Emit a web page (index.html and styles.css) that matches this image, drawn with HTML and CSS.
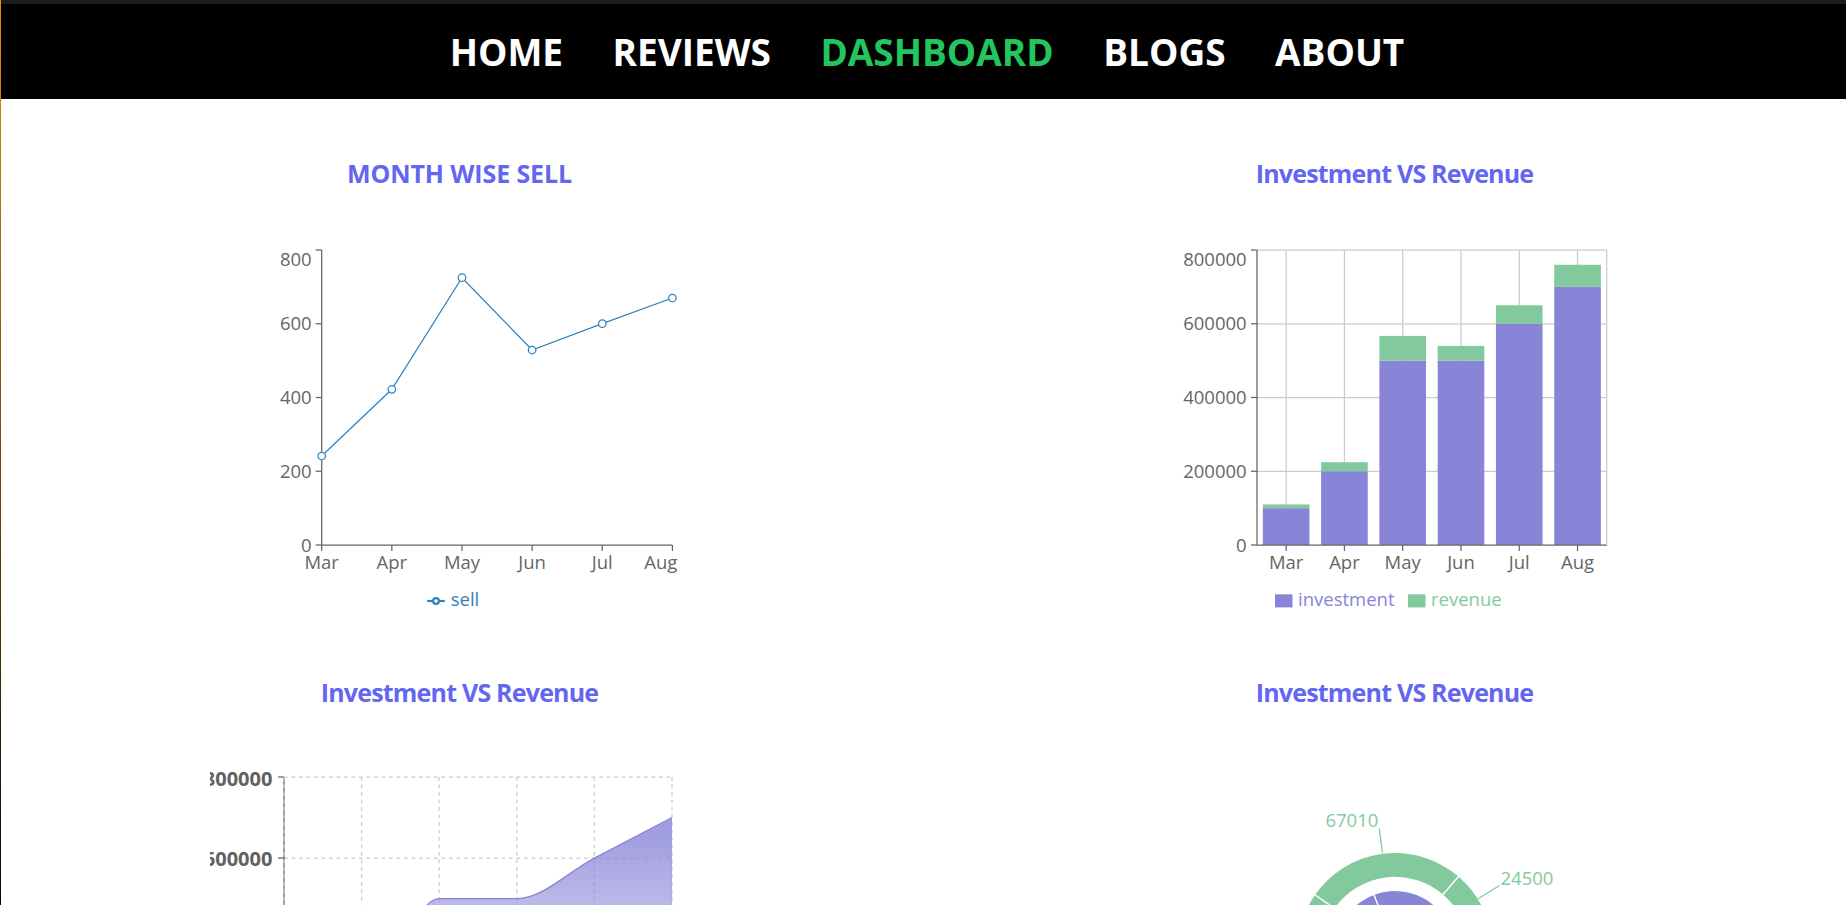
FILE: index.html
```html
<!DOCTYPE html>
<html lang="en">
<head>
<meta charset="utf-8">
<title>Dashboard</title>
<link rel="stylesheet" href="styles.css">
</head>
<body>
<header class="topbar">
  <nav>
    <ul class="nav-list">
      <li><a class="nav-link" href="#">HOME</a></li>
      <li><a class="nav-link" href="#">REVIEWS</a></li>
      <li><a class="nav-link active" href="#">DASHBOARD</a></li>
      <li><a class="nav-link" href="#">BLOGS</a></li>
      <li><a class="nav-link" href="#">ABOUT</a></li>
    </ul>
  </nav>
</header>

<main class="dashboard">
  <section class="card">
    <h2 class="card-title card-title--caps">MONTH WISE SELL</h2>
    <svg class="chart" viewBox="0 0 500 488.5" width="500" height="488.5">
      <g class="axis">
        <line x1="111.7" y1="62" x2="111.7" y2="357"/>
        <line x1="111.7" y1="357" x2="462.4" y2="357"/>
        <line x1="105.7" y1="62" x2="111.7" y2="62"/>
        <line x1="105.7" y1="135.75" x2="111.7" y2="135.75"/>
        <line x1="105.7" y1="209.5" x2="111.7" y2="209.5"/>
        <line x1="105.7" y1="283.25" x2="111.7" y2="283.25"/>
        <line x1="105.7" y1="357" x2="111.7" y2="357"/>
        <line x1="111.7" y1="357" x2="111.7" y2="363"/>
        <line x1="181.84" y1="357" x2="181.84" y2="363"/>
        <line x1="251.98" y1="357" x2="251.98" y2="363"/>
        <line x1="322.12" y1="357" x2="322.12" y2="363"/>
        <line x1="392.26" y1="357" x2="392.26" y2="363"/>
        <line x1="462.4" y1="357" x2="462.4" y2="363"/>
      </g>
      <g class="tick-label end">
        <text x="101.7" y="78">800</text>
        <text x="101.7" y="142.4">600</text>
        <text x="101.7" y="216.1">400</text>
        <text x="101.7" y="289.9">200</text>
        <text x="101.7" y="363.6">0</text>
      </g>
      <g class="tick-label mid">
        <text x="111.7" y="381">Mar</text>
        <text x="181.84" y="381">Apr</text>
        <text x="251.98" y="381">May</text>
        <text x="322.12" y="381">Jun</text>
        <text x="392.26" y="381">Jul</text>
        <text x="467.4" y="381" class="end">Aug</text>
      </g>
      <path class="sell-line" d="M111.7,268 L181.84,201.3 L251.98,89.7 L322.12,162 L392.26,135.7 L462.4,110"/>
      <g class="sell-dot">
        <circle cx="111.7" cy="268" r="3.75"/>
        <circle cx="181.84" cy="201.3" r="3.75"/>
        <circle cx="251.98" cy="89.7" r="3.75"/>
        <circle cx="322.12" cy="162" r="3.75"/>
        <circle cx="392.26" cy="135.7" r="3.75"/>
        <circle cx="462.4" cy="110" r="3.75"/>
      </g>
      <g class="legend">
        <line class="sell-legend" x1="217.2" y1="413" x2="234.7" y2="413"/>
        <circle class="sell-legend-dot" cx="226" cy="413" r="2.9"/>
        <text class="sell-text" x="240.7" y="417.7">sell</text>
      </g>
    </svg>
  </section>

  <section class="card">
    <h2 class="card-title">Investment VS Revenue</h2>
    <svg class="chart" viewBox="0 0 500 488.5" width="500" height="488.5">
      <g class="grid">
        <line x1="112" y1="62" x2="461.7" y2="62"/>
        <line x1="112" y1="135.75" x2="461.7" y2="135.75"/>
        <line x1="112" y1="209.5" x2="461.7" y2="209.5"/>
        <line x1="112" y1="283.25" x2="461.7" y2="283.25"/>
        <line x1="141.14" y1="62" x2="141.14" y2="357"/>
        <line x1="199.42" y1="62" x2="199.42" y2="357"/>
        <line x1="257.7" y1="62" x2="257.7" y2="357"/>
        <line x1="315.98" y1="62" x2="315.98" y2="357"/>
        <line x1="374.26" y1="62" x2="374.26" y2="357"/>
        <line x1="432.54" y1="62" x2="432.54" y2="357"/>
        <line x1="461.7" y1="62" x2="461.7" y2="357"/>
      </g>
      <g class="bar-inv">
        <rect x="117.83" y="320.13" width="46.62" height="36.87"/>
        <rect x="176.11" y="283.25" width="46.62" height="73.75"/>
        <rect x="234.39" y="172.63" width="46.62" height="184.37"/>
        <rect x="292.67" y="172.63" width="46.62" height="184.37"/>
        <rect x="350.95" y="135.75" width="46.62" height="221.25"/>
        <rect x="409.23" y="98.88" width="46.62" height="258.12"/>
      </g>
      <g class="bar-rev">
        <rect x="117.83" y="316.44" width="46.62" height="3.69"/>
        <rect x="176.11" y="274.22" width="46.62" height="9.03"/>
        <rect x="234.39" y="147.91" width="46.62" height="24.72"/>
        <rect x="292.67" y="157.88" width="46.62" height="14.75"/>
        <rect x="350.95" y="117.31" width="46.62" height="18.44"/>
        <rect x="409.23" y="76.75" width="46.62" height="22.13"/>
      </g>
      <g class="axis">
        <line x1="112" y1="62" x2="112" y2="357"/>
        <line x1="112" y1="357" x2="461.7" y2="357"/>
        <line x1="106" y1="62" x2="112" y2="62"/>
        <line x1="106" y1="135.75" x2="112" y2="135.75"/>
        <line x1="106" y1="209.5" x2="112" y2="209.5"/>
        <line x1="106" y1="283.25" x2="112" y2="283.25"/>
        <line x1="106" y1="357" x2="112" y2="357"/>
        <line x1="141.14" y1="357" x2="141.14" y2="363"/>
        <line x1="199.42" y1="357" x2="199.42" y2="363"/>
        <line x1="257.7" y1="357" x2="257.7" y2="363"/>
        <line x1="315.98" y1="357" x2="315.98" y2="363"/>
        <line x1="374.26" y1="357" x2="374.26" y2="363"/>
        <line x1="432.54" y1="357" x2="432.54" y2="363"/>
      </g>
      <g class="tick-label end">
        <text x="101.7" y="78">800000</text>
        <text x="101.7" y="142.4">600000</text>
        <text x="101.7" y="216.1">400000</text>
        <text x="101.7" y="289.9">200000</text>
        <text x="101.7" y="363.6">0</text>
      </g>
      <g class="tick-label mid">
        <text x="141.14" y="381">Mar</text>
        <text x="199.42" y="381">Apr</text>
        <text x="257.7" y="381">May</text>
        <text x="315.98" y="381">Jun</text>
        <text x="374.26" y="381">Jul</text>
        <text x="432.54" y="381">Aug</text>
      </g>
      <g class="legend">
        <rect class="inv-fill" x="130" y="406.3" width="17.5" height="13.1"/>
        <text class="inv-text" x="153" y="417.7">investment</text>
        <rect class="rev-fill" x="263" y="406.3" width="17.5" height="13.1"/>
        <text class="rev-text" x="286" y="417.7">revenue</text>
      </g>
    </svg>
  </section>

  <section class="card">
    <h2 class="card-title">Investment VS Revenue</h2>
    <svg class="chart" viewBox="0 0 500 488.5" width="500" height="488.5">
      <defs>
        <linearGradient id="gradInv" x1="0" y1="0" x2="0" y2="1">
          <stop offset="5%" stop-color="#8884d8" stop-opacity="0.8"/>
          <stop offset="95%" stop-color="#8884d8" stop-opacity="0"/>
        </linearGradient>
        <linearGradient id="gradRev" x1="0" y1="0" x2="0" y2="1">
          <stop offset="5%" stop-color="#82ca9d" stop-opacity="0.8"/>
          <stop offset="95%" stop-color="#82ca9d" stop-opacity="0"/>
        </linearGradient>
      </defs>
      <g class="grid dashed">
        <line x1="74" y1="70" x2="462" y2="70"/>
        <line x1="74" y1="151.1" x2="462" y2="151.1"/>
        <line x1="74" y1="232.2" x2="462" y2="232.2"/>
        <line x1="74" y1="313.3" x2="462" y2="313.3"/>
        <line x1="151.6" y1="70" x2="151.6" y2="394.4"/>
        <line x1="229.2" y1="70" x2="229.2" y2="394.4"/>
        <line x1="306.8" y1="70" x2="306.8" y2="394.4"/>
        <line x1="384.4" y1="70" x2="384.4" y2="394.4"/>
        <line x1="462" y1="70" x2="462" y2="394.4"/>
      </g>
      <path class="area-inv" d="M74,353.85 C99.87,347.09 125.73,340.34 151.6,313.3 C177.47,286.26 203.33,191.65 229.2,191.65 C255.07,191.65 280.93,191.65 306.8,191.65 C332.67,191.65 358.53,164.62 384.4,151.1 C410.27,137.58 436.13,124.07 462,110.55 L462,394.4 L74,394.4 Z"/>
      <path class="area-inv-line" d="M74,353.85 C99.87,347.09 125.73,340.34 151.6,313.3 C177.47,286.26 203.33,191.65 229.2,191.65 C255.07,191.65 280.93,191.65 306.8,191.65 C332.67,191.65 358.53,164.62 384.4,151.1 C410.27,137.58 436.13,124.07 462,110.55"/>
      <path class="area-rev" d="M74,390.35 C99.87,388 125.73,386 151.6,384.47 C177.47,380 203.33,367.23 229.2,367.23 C255.07,367.23 280.93,378.18 306.8,378.18 C332.67,378.18 358.53,374.13 384.4,374.13 C410.27,374.13 436.13,370.07 462,370.07 L462,394.4 L74,394.4 Z"/>
      <g class="axis">
        <line x1="74" y1="70" x2="74" y2="394.4"/>
        <line x1="74" y1="394.4" x2="462" y2="394.4"/>
        <line x1="68" y1="70" x2="74" y2="70"/>
        <line x1="68" y1="151.1" x2="74" y2="151.1"/>
        <line x1="68" y1="232.2" x2="74" y2="232.2"/>
        <line x1="68" y1="313.3" x2="74" y2="313.3"/>
        <line x1="68" y1="394.4" x2="74" y2="394.4"/>
      </g>
      <line class="axis-dash" x1="74" y1="70" x2="74" y2="394.4"/>
      <g class="tick-label end bold">
        <text x="62.4" y="79.4">800000</text>
        <text x="62.4" y="158.7">600000</text>
        <text x="62.4" y="239.5">400000</text>
        <text x="62.4" y="320.6">200000</text>
        <text x="62.4" y="401.7">0</text>
      </g>
      <g class="tick-label mid bold">
        <text x="74" y="420">Mar</text>
        <text x="151.6" y="420">Apr</text>
        <text x="229.2" y="420">May</text>
        <text x="306.8" y="420">Jun</text>
        <text x="384.4" y="420">Jul</text>
        <text x="462" y="420">Aug</text>
      </g>
    </svg>
  </section>

  <section class="card">
    <h2 class="card-title">Investment VS Revenue</h2>
    <svg class="chart" viewBox="0 0 500 488.5" width="500" height="488.5">
      <g class="pie-inv">
        <path d="M250,243.4 L310,243.4 A60,60 0 0 0 308.26,229.04 Z"/>
        <path d="M250,243.4 L308.26,229.04 A60,60 0 0 0 294.91,203.61 Z"/>
        <path d="M250,243.4 L294.91,203.61 A60,60 0 0 0 228.72,187.3 Z"/>
        <path d="M250,243.4 L228.72,187.3 A60,60 0 0 0 190,243.4 Z"/>
        <path d="M250,243.4 L190,243.4 A60,60 0 0 0 242.77,302.96 Z"/>
        <path d="M250,243.4 L242.77,302.96 A60,60 0 0 0 310,243.4 Z"/>
      </g>
      <g class="pie-rev">
        <path d="M348,243.4 A98,98 0 0 0 344.96,219.17 L320.73,225.35 A73,73 0 0 1 323,243.4 Z"/>
        <path d="M344.96,219.17 A98,98 0 0 0 313.8,169.01 L297.53,187.99 A73,73 0 0 1 320.73,225.35 Z"/>
        <path d="M313.8,169.01 A98,98 0 0 0 169.43,187.61 L189.99,201.84 A73,73 0 0 1 297.53,187.99 Z"/>
        <path d="M169.43,187.61 A98,98 0 0 0 159.49,280.98 L182.58,271.4 A73,73 0 0 1 189.99,201.84 Z"/>
        <path d="M159.49,280.98 A98,98 0 0 0 257.04,341.15 L255.24,316.21 A73,73 0 0 1 182.58,271.4 Z"/>
        <path d="M257.04,341.15 A98,98 0 0 0 348,243.4 L323,243.4 A73,73 0 0 1 255.24,316.21 Z"/>
      </g>
      <g class="pie-label-line">
        <line x1="347.24" y1="231.19" x2="372.04" y2="228.08"/>
        <line x1="333.25" y1="191.69" x2="354.48" y2="178.5"/>
        <line x1="237.48" y1="146.2" x2="234.29" y2="121.41"/>
        <line x1="152.55" y1="233.03" x2="127.69" y2="230.38"/>
        <line x1="198.56" y1="326.82" x2="185.44" y2="348.1"/>
        <line x1="321.76" y1="310.14" x2="340.06" y2="327.17"/>
      </g>
      <g class="pie-label">
        <text x="373" y="227">10000</text>
        <text x="355.5" y="177.5">24500</text>
        <text x="233.3" y="120.4" class="end">67010</text>
        <text x="126.7" y="229.4" class="end">40000</text>
        <text x="184.4" y="347.1" class="end">50000</text>
        <text x="341" y="326.2">60000</text>
      </g>
    </svg>
  </section>
</main>
</body>
</html>
```

FILE: styles.css
```css
html, body {
  margin: 0;
  padding: 0;
  height: 100%;
  overflow: hidden;
}

body {
  font-family: "Open Sans", "Noto Sans", sans-serif;
  background: #ffffff;
}

body::before {
  content: "";
  position: fixed;
  left: 0;
  top: 0;
  width: 1px;
  height: 100%;
  background: linear-gradient(to bottom, #e8900a, #070604);
  z-index: 10;
}

.topbar {
  border-top: 4px solid #1c1c1c;
  background: #000000;
  height: 95px;
}

.topbar nav {
  height: 100%;
}

.nav-list {
  list-style: none;
  margin: 0;
  padding: 0 0 0 8px;
  height: 100%;
  display: flex;
  justify-content: center;
  align-items: center;
  gap: 49.5px;
}

.nav-link {
  color: #ffffff;
  text-decoration: none;
  font-weight: 700;
  font-size: 37px;
}

.nav-link.active {
  color: #22c55e;
}

.dashboard {
  display: grid;
  grid-template-columns: 1fr 1fr;
  column-gap: 32px;
  padding: 59px 0 0 8px;
}

.card {
  display: flex;
  flex-direction: column;
  align-items: center;
}

.card-title {
  margin: 0;
  font-size: 25px;
  line-height: 30px;
  font-weight: 700;
  color: #6366f1;
  letter-spacing: -0.8px;
}

.card-title--caps {
  letter-spacing: -0.1px;
}

.chart {
  display: block;
  width: 500px;
  height: 488.5px;
  overflow: hidden;
  font-family: "Open Sans", "Noto Sans", sans-serif;
  font-size: 18.5px;
}

.axis line {
  stroke: #666666;
  stroke-width: 1.25;
}

.axis-dash {
  stroke: #cccccc;
  stroke-width: 1.25;
  stroke-dasharray: 3.75 3.75;
}

.grid line {
  stroke: #cccccc;
  stroke-width: 1.25;
}

.grid.dashed line {
  stroke-dasharray: 3.75 3.75;
}

.tick-label text {
  fill: #666666;
}

.tick-label.end text,
.tick-label text.end {
  text-anchor: end;
}

.tick-label.mid text {
  text-anchor: middle;
}

.tick-label.mid text.end {
  text-anchor: end;
}

.tick-label.bold text {
  font-weight: 700;
  font-size: 20px;
  fill: #616161;
}

.sell-line {
  fill: none;
  stroke: #3182bd;
  stroke-width: 1.25;
}

.sell-dot circle {
  fill: #ffffff;
  stroke: #3182bd;
  stroke-width: 1.25;
}

.sell-legend {
  stroke: #3182bd;
  stroke-width: 2.2;
}

.sell-legend-dot {
  fill: #ffffff;
  stroke: #3182bd;
  stroke-width: 2.2;
}

.sell-text {
  fill: #3182bd;
}

.bar-inv rect,
.inv-fill {
  fill: #8884d8;
}

.bar-rev rect,
.rev-fill {
  fill: #82ca9d;
}

.inv-text {
  fill: #8884d8;
}

.rev-text {
  fill: #82ca9d;
}

.area-inv {
  fill: url(#gradInv);
}

.area-inv-line {
  fill: none;
  stroke: #8884d8;
  stroke-width: 1.25;
}

.area-rev {
  fill: url(#gradRev);
  stroke: #82ca9d;
  stroke-width: 1.25;
}

.pie-inv path {
  fill: #8884d8;
  stroke: #ffffff;
  stroke-width: 1.25;
}

.pie-rev path {
  fill: #82ca9d;
  stroke: #ffffff;
  stroke-width: 1.25;
}

.pie-label-line line {
  stroke: #82ca9d;
  stroke-width: 1.25;
}

.pie-label text {
  fill: #82ca9d;
}

.pie-label text.end {
  text-anchor: end;
}
```
